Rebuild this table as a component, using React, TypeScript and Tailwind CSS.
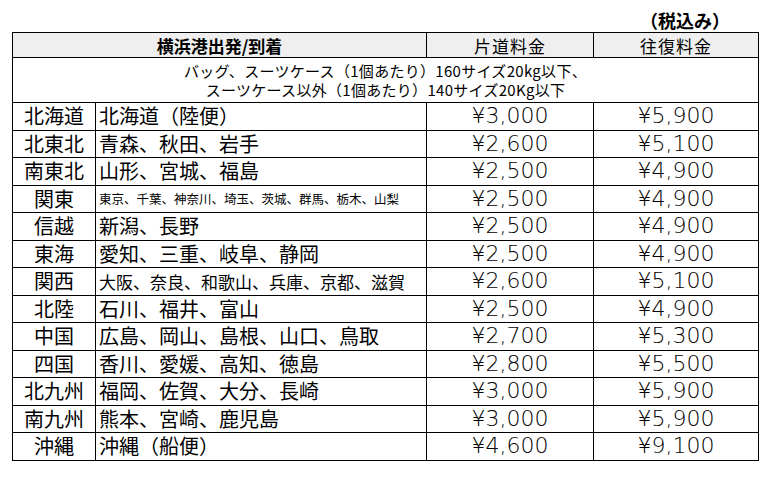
const rows: { region: string; area: string; one: string; round: string; size?: "sm" | "md" }[] = [
  { region: "北海道", area: "北海道（陸便）", one: "¥3,000", round: "¥5,900" },
  { region: "北東北", area: "青森、秋田、岩手", one: "¥2,600", round: "¥5,100" },
  { region: "南東北", area: "山形、宮城、福島", one: "¥2,500", round: "¥4,900" },
  { region: "関東", area: "東京、千葉、神奈川、埼玉、茨城、群馬、栃木、山梨", one: "¥2,500", round: "¥4,900", size: "sm" },
  { region: "信越", area: "新潟、長野", one: "¥2,500", round: "¥4,900" },
  { region: "東海", area: "愛知、三重、岐阜、静岡", one: "¥2,500", round: "¥4,900" },
  { region: "関西", area: "大阪、奈良、和歌山、兵庫、京都、滋賀", one: "¥2,600", round: "¥5,100", size: "md" },
  { region: "北陸", area: "石川、福井、富山", one: "¥2,500", round: "¥4,900" },
  { region: "中国", area: "広島、岡山、島根、山口、鳥取", one: "¥2,700", round: "¥5,300" },
  { region: "四国", area: "香川、愛媛、高知、徳島", one: "¥2,800", round: "¥5,500" },
  { region: "北九州", area: "福岡、佐賀、大分、長崎", one: "¥3,000", round: "¥5,900" },
  { region: "南九州", area: "熊本、宮崎、鹿児島", one: "¥3,000", round: "¥5,900" },
  { region: "沖縄", area: "沖縄（船便）", one: "¥4,600", round: "¥9,100" },
];

const jp = "font-['Noto_Sans_CJK_JP',sans-serif]";
const num = "font-['DejaVu_Sans','Noto_Sans_CJK_JP',sans-serif] font-extralight";

export default function App() {
  return (
    <div className={`w-[769px] h-[482px] bg-white text-black pl-[12px] ${jp}`}>
      <div className="h-[32px] w-[746px] flex items-end justify-end pr-[28px]">
        <span className="text-[18px] font-bold leading-[24px]">（税込み）</span>
      </div>
      <table className="w-[746px] table-fixed border-collapse border-[1.5px] border-black">
        <colgroup>
          <col className="w-[83px]" />
          <col className="w-[331px]" />
          <col className="w-[167px]" />
          <col className="w-[165px]" />
        </colgroup>
        <thead>
          <tr className="h-[25px] bg-[#efefef]">
            <th colSpan={2} className="border-[1.5px] border-black p-0 text-[17px] font-bold leading-none">
              横浜港出発/到着
            </th>
            <th className="border-[1.5px] border-black p-0 text-[17px] font-normal leading-none tracking-[1px]">
              片道料金
            </th>
            <th className="border-[1.5px] border-black p-0 text-[17px] font-normal leading-none tracking-[1px]">
              往復料金
            </th>
          </tr>
        </thead>
        <tbody>
          <tr className="h-[45px]">
            <td colSpan={4} className="border-[1.5px] border-black p-0 text-center text-[15px] leading-[19px] tracking-[0.3px]">
              <div>バッグ、スーツケース（1個あたり）160サイズ20kg以下、</div>
              <div>スーツケース以外（1個あたり）140サイズ20Kg以下</div>
            </td>
          </tr>
          {rows.map((r) => (
            <tr key={r.region} className="h-[27.5px]">
              <td className="border-[1.5px] border-black p-0 text-center text-[20px] leading-none">
                {r.region}
              </td>
              <td
                className={`border-[1.5px] border-black p-0 pl-[3px] leading-none whitespace-nowrap ${
                  r.size === "sm" ? "text-[12.5px]" : r.size === "md" ? "text-[17px]" : "text-[20px]"
                }`}
              >
                {r.area}
              </td>
              <td className={`border-[1.5px] border-black p-0 text-center text-[22px] leading-none ${num}`}>
                {r.one}
              </td>
              <td className={`border-[1.5px] border-black p-0 text-center text-[22px] leading-none ${num}`}>
                {r.round}
              </td>
            </tr>
          ))}
        </tbody>
      </table>
    </div>
  );
}
